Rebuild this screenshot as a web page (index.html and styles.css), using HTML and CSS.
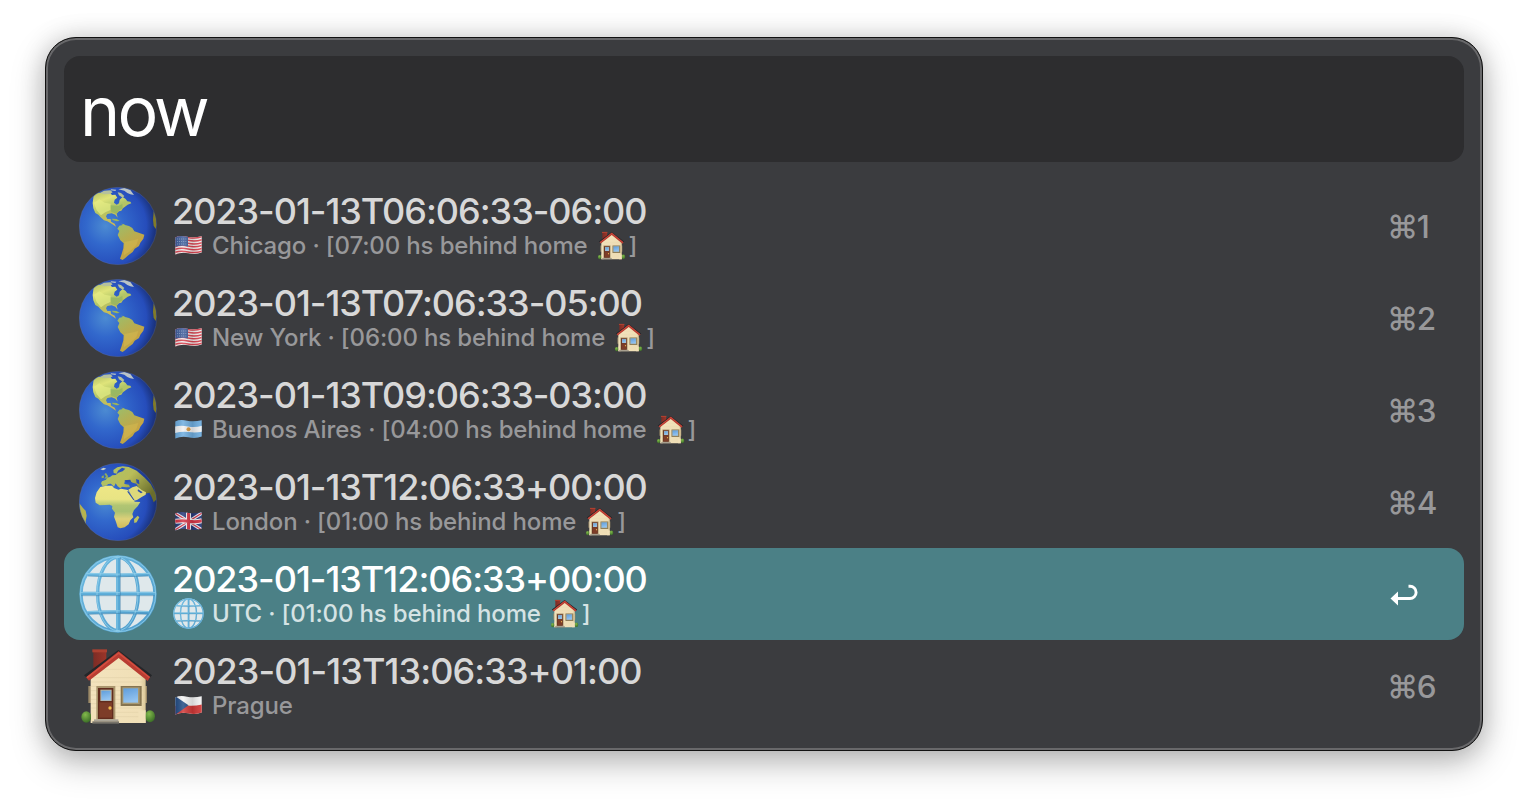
FILE: index.html
```
<!DOCTYPE html>
<html lang="en">
<head>
<meta charset="utf-8">
<title>now</title>
<link rel="stylesheet" href="styles.css">
</head>
<body>
<svg class="defs" width="0" height="0" aria-hidden="true">
  <defs>
    <radialGradient id="sea" cx=".34" cy=".5" r=".7"><stop offset="0" stop-color="#4c8bd2"/><stop offset=".35" stop-color="#3268cc"/><stop offset=".75" stop-color="#264dbb"/><stop offset="1" stop-color="#14255f"/></radialGradient>
    <linearGradient id="land" x1="0" y1="0" x2=".4" y2="1"><stop offset="0" stop-color="#b0bd62"/><stop offset=".3" stop-color="#dfe47a"/><stop offset=".55" stop-color="#b2c667"/><stop offset="1" stop-color="#d0b851"/></linearGradient>
    <linearGradient id="south" x1="0" y1="0" x2=".5" y2="1"><stop offset="0" stop-color="#9cbd6b"/><stop offset=".42" stop-color="#b5ae52"/><stop offset=".7" stop-color="#c6a545"/><stop offset="1" stop-color="#b5a548"/></linearGradient>
    <linearGradient id="africa" x1="0" y1="0" x2="0" y2="1"><stop offset="0" stop-color="#eee786"/><stop offset=".32" stop-color="#e8e484"/><stop offset=".46" stop-color="#b1c573"/><stop offset=".6" stop-color="#a9c172"/><stop offset=".78" stop-color="#ddd079"/><stop offset="1" stop-color="#cfb958"/></linearGradient>
    <linearGradient id="asia" x1="0" y1="0" x2="1" y2=".6"><stop offset="0" stop-color="#a9c46c"/><stop offset=".5" stop-color="#b9bd59"/><stop offset="1" stop-color="#6a6d2c"/></linearGradient>
    <linearGradient id="bars" x1="0" y1="0" x2="1" y2="1"><stop offset="0" stop-color="#6bb8e0"/><stop offset="1" stop-color="#4e9ccb"/></linearGradient>
    <linearGradient id="wall" x1="0" y1="0" x2="1" y2="0"><stop offset="0" stop-color="#f3e3bd"/><stop offset=".9" stop-color="#f0dfb6"/><stop offset="1" stop-color="#d9c596"/></linearGradient>
    <linearGradient id="glass" x1="0" y1="0" x2=".3" y2="1"><stop offset="0" stop-color="#5f9ddb"/><stop offset="1" stop-color="#93c3f0"/></linearGradient>
    <linearGradient id="brick" x1="0" y1="0" x2="1" y2="0"><stop offset="0" stop-color="#7c2c25"/><stop offset="1" stop-color="#9c3529"/></linearGradient>
    <radialGradient id="bush" cx=".4" cy=".3" r=".7"><stop offset="0" stop-color="#83b94c"/><stop offset="1" stop-color="#3c6f27"/></radialGradient>
    <linearGradient id="ripple" x1="0" y1="0" x2="1" y2="0"><stop offset="0" stop-color="#000" stop-opacity=".1"/><stop offset=".3" stop-color="#fff" stop-opacity=".15"/><stop offset=".65" stop-color="#000" stop-opacity=".13"/><stop offset="1" stop-color="#fff" stop-opacity=".08"/></linearGradient>
    <clipPath id="disc"><circle cx="144" cy="138" r="116"/></clipPath>
    <clipPath id="cloth"><path d="M.3 2.4Q5 .2 12 1.7T26.7 1.2V17.4Q21 19.8 13.500 18.300T.3 19.600Z"/></clipPath>
    <filter id="soft" color-interpolation-filters="sRGB"><feGaussianBlur stdDeviation="1"/></filter>

    <symbol id="americas" viewBox="27 21 234 234">
      <circle cx="144" cy="138" r="116.500" fill="url(#sea)"/>
      <g clip-path="url(#disc)" filter="url(#soft)">
        <path fill="url(#land)" d="M71 46L84 38 98 39 106 34 121 39 126 45 136 44 142 53 134 59 132 68 140 74 147 70 149 59 158 51 167 57 172 64 181 65 184 70 173 74 167 79 159 85 154 92 147 94 140 101 143 113 136 104 125 100 112 102 108 109 112 117 122 117 123 125 134 131 138 140 126 132 112 124 102 121 92 112 85 104 76 99 70 85 68 69Z"/>
        <path fill="#b6c19c" d="M90 39L102 32 121 31 128 37 119 42 103 43ZM143 37L153 39 163 48 158 53 147 46Z"/>
        <path fill="#bac4c6" d="M145 28L163 24 181 30 192 45 181 43 172 39 163 32ZM123 28L139 29 136 33 122 31Z"/>
        <path fill="#e6ec85" opacity=".7" d="M72 68L88 58 104 68 122 71 121 90 106 97 93 106 80 91Z"/>
        <path fill="#7dab5f" opacity=".5" d="M122 76L145 78 157 72 158 85 146 92 140 101 124 96Z"/>
        <path fill="#9db45a" d="M126 116L140 117 149 123 140 124 128 120ZM153 131L165 133 160 136Z"/>
        <path fill="url(#south)" d="M148 137L162 134 177 138 187 144 193 154 206 158 223 164 220 176 211 188 207 198 194 206 188 216 175 226 165 235 158 240 150 236 155 222 160 205 161 190 151 181 143 165 148 153 142 146Z"/>
        <path fill="#d8be52" opacity=".45" d="M163 186L190 181 205 177 199 196 178 215 162 225Z"/>
        <path fill="#827b27" d="M251 94L257 105 260 134 257 147 251 137 249 119Z"/>
      </g>
      <circle cx="144" cy="138" r="116" fill="none" stroke="#69728c" stroke-width="1.500" opacity=".6"/>
    </symbol>

    <symbol id="emea" viewBox="27 21 234 234">
      <circle cx="144" cy="138" r="116.500" fill="url(#sea)"/>
      <g clip-path="url(#disc)" filter="url(#soft)">
        <path fill="url(#asia)" d="M93 82L96 76 108 71 111 65 120 63 127 58 137 57 145 50 158 46 166 38 156 35 144 44 140 53 131 51 130 42 142 34 158 31 176 33 200 44 224 65 242 84 257 112 260 130 251 139 245 123 238 110 226 113 220 107 207 97 199 83 188 80 176 72 164 76 163 84 177 86 180 94 168 94 156 92 151 97 143 91 137 82 132 92 123 83 115 84 108 89 97 90Z"/>
        <path fill="#91aa5e" d="M103 54L108 51 114 60 113 67 103 68 108 61ZM95 61L101 58 102 65 95 67Z"/>
        <path fill="#c8d0c9" d="M91 40L101 35 109 38 99 43Z"/>
        <path fill="url(#africa)" d="M91 93L109 89 126 89 132 96 145 101 153 98 174 102 179 112 190 129 194 137 211 138 203 151 192 162 187 174 190 184 181 193 176 205 164 214 151 217 143 214 138 198 132 182 135 170 126 158 127 150 119 146 106 147 89 148 77 140 75 126 80 109Z"/>
        <path fill="#ddd97b" d="M175 101L187 94 200 90 216 103 228 109 227 116 215 123 201 132 192 134 185 121Z"/>
        <path fill="#2b4fac" d="M204 100L218 109 213 112 203 105ZM174 104L194 133 190 132 172 107ZM163 73L181 71 183 77 171 80ZM198 69L207 72 208 85 200 81Z"/>
        <path fill="#bdc25f" d="M203 179L208 184 200 199 193 201 192 190Z"/>
        <path fill="#b7b34f" d="M28 142L39 156 47 164 50 179 47 196 49 211 36 190 28 162Z"/>
      </g>
      <circle cx="144" cy="138" r="116" fill="none" stroke="#69728c" stroke-width="1.500" opacity=".6"/>
    </symbol>

    <symbol id="meridians" viewBox="27 15 234 234">
      <circle cx="144" cy="132" r="113" fill="#dfe8eb"/>
      <g fill="none" stroke="url(#bars)" stroke-width="10">
        <circle cx="144" cy="132" r="111"/>
        <ellipse cx="144" cy="132" rx="61" ry="110"/>
        <path d="M51 73Q144 78 237 73M51 188Q144 183 237 188"/>
      </g>
      <path d="M138 19h12v226h-12zM31 125h226v11H31z" fill="#5aaad6"/>
      <g fill="none" stroke="#92d0ea" stroke-width="2.500">
        <circle cx="144" cy="132" r="113"/><path d="M51 70Q144 75 237 70M51 185Q144 180 237 185M32 128H256M141 20V244"/>
        <path d="M81 132A62 110 0 0 1 144 22M144 22A62 110 0 0 1 204 132A60 110 0 0 1 144 242A62 110 0 0 1 81 132"/>
      </g>
      <path d="M54 78Q144 83 234 78M34 137H254M54 193Q144 188 234 193M151 22V242" fill="none" stroke="#387ca6" stroke-width="2" opacity=".75"/>
    </symbol>

    <symbol id="house" viewBox="27 15 234 234">
      <path fill="#9c8a68" d="M55 132h10v51h-10zM222 132h9v51h-9z"/>
      <path fill="url(#brick)" d="M70 27h39v55H70z"/><path fill="#ac4030" d="M67 22h44v9H67z"/>
      <path fill="url(#wall)" d="M147 40L227 106V243H62V106Z"/>
      <path d="M63 107H224M63 120H224M63 133H224M63 146H224M63 159H224M63 172H224M63 185H224M63 198H224M63 211H224M63 224H224M91 82H198" stroke="#dfcfa5" stroke-width="1.500"/>
      <path fill="#242629" d="M42 100L145 24 246 100 236 112 146 41 54 110Z"/>
      <path fill="#b93d32" d="M48 106L146 28 241 105 233 117 146 48 57 116Z"/>
      <path fill="#d54f40" d="M50 105L146 31 239 105 237 108 146 36 53 109Z"/>
      <ellipse cx="49" cy="225" rx="15" ry="17" fill="url(#bush)"/><ellipse cx="240" cy="223" rx="15" ry="18" fill="url(#bush)"/>
      <path fill="#f1e0b8" d="M63 205h18v38H63zM205 205h22v38h-22z"/>
      <path fill="#aa966e" d="M79 132h57v101H79z"/><path fill="#612c1d" d="M84 138h46v93H84z"/><path fill="#7d3d28" d="M88 181h38v46H88z"/>
      <path fill="#b9b6a3" d="M91 143h34v34H91z"/><path fill="url(#glass)" d="M94 146h28v29H94z"/>
      <circle cx="120" cy="198" r="5" fill="#eeb84b"/>
      <path fill="#857450" d="M152 132h63v60h-63z"/><path fill="#a89a74" d="M157 136h52v50h-52z"/><path fill="url(#glass)" d="M160 139h44v43h-44z"/>
      <path fill="#aaa497" d="M72 232h73v6H72z"/><path fill="#77736a" d="M67 238h80v7H67z"/>
    </symbol>

    <symbol id="us" viewBox="0 0 27 21"><g clip-path="url(#cloth)"><path fill="#f4eeee" d="M0 0h27v21H0z"/><path d="M0 2.8Q6 .7 13 2.400T27 1.800M0 5.700Q6 3.600 13 5.300T27 4.700M0 8.600Q6 6.500 13 8.200T27 7.600M0 11.500Q6 9.400 13 11.100T27 10.500M0 14.400Q6 12.300 13 14T27 13.400M0 17.300Q6 15.200 13 16.900T27 16.300M0 20.200Q6 18.100 13 19.800T27 19.200" fill="none" stroke="#d94350" stroke-width="1.500"/><path fill="#3f5d9b" d="M0 0h13v11.500Q6 10 0 12z"/><path d="M2 4h10M2 6.500h10M2 9h10" stroke="#9cafd0" stroke-width=".8" stroke-dasharray=".9 1.200"/><path fill="url(#ripple)" d="M0 0h27v21H0z"/></g></symbol>
    <symbol id="ar" viewBox="0 0 27 21"><g clip-path="url(#cloth)"><path fill="#6faee0" d="M0 0h27v21H0z"/><path fill="#f2f2f2" d="M0 7.500Q6 6 13 7.400T27 6.800V12.800Q20 14 13.500 13T0 14Z"/><circle cx="13.500" cy="10.200" r="2" fill="#d9983e"/><path fill="url(#ripple)" d="M0 0h27v21H0z"/></g></symbol>
    <symbol id="gb" viewBox="0 0 27 21"><g clip-path="url(#cloth)"><path fill="#283b7c" d="M0 0h27v21H0z"/><path d="M0 2L27 19M0 19L27 2" stroke="#e9edf3" stroke-width="3.200"/><path d="M0 2L27 19M0 19L27 2" stroke="#cf3447" stroke-width="1.200"/><path d="M13.500 0V21M0 10.400Q7 9 13.500 10.200T27 9.800" fill="none" stroke="#f0f2f5" stroke-width="5"/><path d="M13.500 0V21M0 10.400Q7 9 13.500 10.200T27 9.800" fill="none" stroke="#d43445" stroke-width="3"/><path fill="url(#ripple)" d="M0 0h27v21H0z"/></g></symbol>
    <symbol id="cz" viewBox="0 0 27 21"><g clip-path="url(#cloth)"><path fill="#f4f4f4" d="M0 0h27v21H0z"/><path fill="#d13837" d="M0 11Q8 9.500 13 10.400T27 9.500V21H0Z"/><path fill="#244d86" d="M0 1L13.500 10.300 0 20Z"/><path fill="url(#ripple)" d="M0 0h27v21H0z"/></g></symbol>
  </defs>
</svg>
<main class="window">
  <div class="search">now</div>
  <ul class="results">
    <li class="row"><svg class="icon"><use href="#americas"/></svg><div class="body"><div class="title">2023-01-13T06:06:33-06:00</div><div class="sub"><svg class="flag"><use href="#us"/></svg><span class="label">Chicago · [07:00 hs behind home</span><svg class="home"><use href="#house"/></svg><span>]</span></div></div><div class="key">⌘1</div></li>
    <li class="row"><svg class="icon"><use href="#americas"/></svg><div class="body"><div class="title">2023-01-13T07:06:33-05:00</div><div class="sub"><svg class="flag"><use href="#us"/></svg><span class="label">New York · [06:00 hs behind home</span><svg class="home"><use href="#house"/></svg><span>]</span></div></div><div class="key">⌘2</div></li>
    <li class="row"><svg class="icon"><use href="#americas"/></svg><div class="body"><div class="title">2023-01-13T09:06:33-03:00</div><div class="sub"><svg class="flag"><use href="#ar"/></svg><span class="label">Buenos Aires · [04:00 hs behind home</span><svg class="home"><use href="#house"/></svg><span>]</span></div></div><div class="key">⌘3</div></li>
    <li class="row"><svg class="icon"><use href="#emea"/></svg><div class="body"><div class="title">2023-01-13T12:06:33+00:00</div><div class="sub"><svg class="flag"><use href="#gb"/></svg><span class="label">London · [01:00 hs behind home</span><svg class="home"><use href="#house"/></svg><span>]</span></div></div><div class="key">⌘4</div></li>
    <li class="row selected"><svg class="icon"><use href="#meridians"/></svg><div class="body"><div class="title">2023-01-13T12:06:33+00:00</div><div class="sub"><svg class="mini"><use href="#meridians"/></svg><span class="label">UTC · [01:00 hs behind home</span><svg class="home"><use href="#house"/></svg><span>]</span></div></div><div class="key"><svg class="return" viewBox="0 0 28 22"><path d="M18.500 2.300H20a5.600 5.600 0 0 1 0 12.200H7" fill="none" stroke="#fff" stroke-width="2.900"/><path d="M.5 14.500L8 7.500V21.500Z" fill="#fff"/></svg></div></li>
    <li class="row"><svg class="icon"><use href="#house"/></svg><div class="body"><div class="title loose">2023-01-13T13:06:33+01:00</div><div class="sub"><svg class="flag"><use href="#cz"/></svg><span class="label">Prague</span></div></div><div class="key">⌘6</div></li>
  </ul>
</main>
</body>
</html>
```
FILE: styles.css
```
* { box-sizing: border-box; }
body { margin: 0; height: 804px; padding: 37px 45px 53px; overflow: hidden; background: #fff; font-family: Inter, "Liberation Sans", sans-serif; }
.defs { position: absolute; }
.window { width: 1438px; height: 714px; padding: 16px; border: 1px solid #111; border-radius: 31px; background: #3b3c3f; box-shadow: inset 0 0 0 2px #68686a, 0 12px 34px rgba(0,0,0,.26), 0 0 26px rgba(0,0,0,.15); }
.search { height: 106px; margin: 2px 2px 18px; padding: 0 16px; border-radius: 16px; background: #2d2d2f; color: #fff; font-size: 68px; font-weight: 400; line-height: 111px; letter-spacing: -2.8px; }
.results { margin: 0 2px; padding: 0; list-style: none; }
.row { display: flex; height: 92px; padding: 7px 27px 7px 15px; border-radius: 16px; color: #d8d8d8; }
.icon { flex: none; width: 78px; height: 78px; }
.body { flex: 1; padding: 3px 0 0 15px; }
.title { height: 43px; font-size: 36px; font-weight: 450; line-height: 43px; letter-spacing: -1.03px; white-space: nowrap; }
.title.loose { letter-spacing: -.92px; }
.sub { display: flex; align-items: center; height: 26px; padding-left: 1px; color: #98989a; font-size: 24px; font-weight: 450; line-height: 26px; white-space: nowrap; }
.label { letter-spacing: -.14px; }
.flag { flex: none; width: 27px; height: 21px; margin: -2px 10px 0 2px; }
.mini { flex: none; width: 31px; height: 31px; margin: -1px 8px 0 0; }
.home { flex: none; width: 29px; height: 29px; margin: -2px 3px 0 9px; }
.key { width: 47px; color: #98989a; font-size: 31.500px; font-weight: 500; line-height: 80px; letter-spacing: -1.400px; text-indent: -3px; white-space: nowrap; }
.return { display: block; width: 28px; height: 22px; margin-top: 29px; }
.selected { background: #4b8086; color: #fff; }
.selected .sub { color: #d5e3e4; }
```
